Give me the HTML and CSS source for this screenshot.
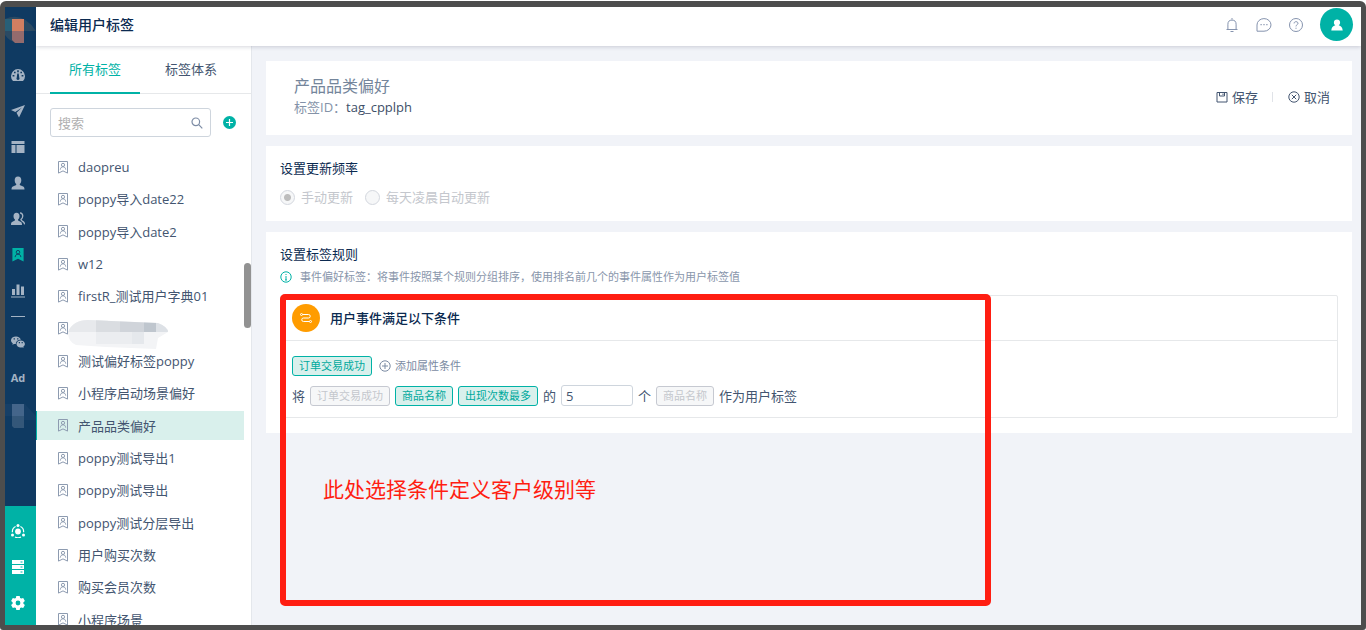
FILE: index.html
```
<!DOCTYPE html>
<html lang="zh-CN">
<head>
<meta charset="utf-8">
<title>编辑用户标签</title>
<link rel="stylesheet" href="styles.css">
</head>
<body>
<svg class="defs" aria-hidden="true">
  <symbol id="badge" viewBox="0 0 10 13"><path d="M.5.5h9v11.6L5 9.9.5 12.1z"/><circle cx="5" cy="3.9" r="1.6"/><path d="M2.3 8.6c.2-2 1.300-2.800 2.700-2.800s2.500.8 2.700 2.800"/></symbol>
</svg>
<div class="frame">
  <nav class="rail" aria-label="主导航">
    <svg class="logo" viewBox="0 0 31 36"><path d="M0 4h12v12H0z" fill="#285f77"/><path d="M0 4q18-8 31 12H19v12H12Q4 26 0 20z" fill="#2b4a63"/><path d="M0 4h7v12H0z" fill="#285f77"/><path d="M7 4h12v12H7z" fill="#d27f61"/><path d="M7 16h12v12h-9l-3-3z" fill="#946b6d"/></svg>
    <a class="rail-item" href="#" aria-label="概览"><svg viewBox="0 0 14 14"><path fill-rule="evenodd" d="M2 13a7 7 0 1 1 10 0zM6.200 2.200v2h1.600v-2zM3 3.700v1.600h1.600V3.700zm6.400 0v1.600H11V3.700zM1.600 7v1.600h1.800V7zm9 0v1.600h1.800V7zM6.300 5.500l-.6 4.300a1.500 1.500 0 1 0 2.600 0l-.6-4.300z"/></svg></a>
    <a class="rail-item" href="#" aria-label="营销"><svg viewBox="0 0 14 14"><path d="M14 1 0 6l4.300 2L11 3.500 5.500 8.700 8 13.500z"/></svg></a>
    <a class="rail-item" href="#" aria-label="页面"><svg viewBox="0 0 14 14"><path d="M.5 1h13v3H.5zM.5 5h4v8h-4zM5.500 5h8v8h-8z"/></svg></a>
    <a class="rail-item" href="#" aria-label="用户"><svg viewBox="0 0 14 14"><path d="M7 .5c2.300 0 3.300 1.700 3.300 3.700S9.500 7.300 8.700 8c0 1.200.5 1.400 2.300 2 1.700.600 2.500 1.200 2.500 3.500H.5C.5 11.200 1.300 10.600 3 10c1.800-.6 2.300-.8 2.300-2-.8-.7-1.600-1.800-1.600-3.800S4.700.5 7 .5z"/></svg></a>
    <a class="rail-item" href="#" aria-label="用户分群"><svg viewBox="0 0 14 14"><path d="M5.500.8c2 0 3 1.500 3 3.300S7.800 6.900 7 7.600c0 1.100.5 1.400 2 2 1.500.5 2 1.300 2 3.400H0c0-2.100.5-2.900 2-3.400 1.500-.6 2-.9 2-2-.8-.7-1.500-1.700-1.500-3.500S3.500.8 5.500.8z"/><path d="M9 .8c3.500.3 3.500 5 .9 6.800 0 1.800 3.400 1.300 3.800 4.700" fill="none" stroke="currentColor" stroke-width="1.300"/></svg></a>
    <a class="rail-item current" href="#" aria-label="用户标签"><svg viewBox="0 0 14 15"><path d="M1 0h12v14.500l-6-3-6 3z"/><g fill="none" stroke="#0f3a62"><circle cx="7" cy="4.500" r="1.900"/><path d="M3.900 9.800c.2-2.200 1.500-3.200 3.100-3.200s2.900 1 3.100 3.200"/></g></svg></a>
    <a class="rail-item" href="#" aria-label="分析"><svg viewBox="0 0 14 14"><path d="M1 5h3v6H1zM5.500.500h3V11h-3zM10 2.500h3V11h-3zM0 12.400h14v1H0z"/></svg></a>
    <hr class="rail-rule">
    <a class="rail-item" href="#" aria-label="微信"><svg viewBox="0 0 14 14"><path fill-rule="evenodd" d="M5 1.400C2.200 1.400 0 3.100 0 5.300c0 1.300.7 2.300 1.800 3l-.4 1.500 1.700-.9c.6.200 1.200.2 1.800.2C4.600 6.600 6.700 4.700 9.800 4.700 9.400 2.800 7.400 1.400 5 1.400zM2.600 3.200h1.300v1.300H2.600zm3.500 0h1.300v1.300H6.100z"/><path fill-rule="evenodd" d="M9.700 5.400c-2.500 0-4.200 1.600-4.200 3.500s1.800 3.500 4.200 3.500c.5 0 1-.1 1.400-.2l1.500.8-.4-1.300c1-.6 1.700-1.600 1.700-2.700 0-2-1.800-3.600-4.200-3.600zM7.800 7H9v1.200H7.800zm2.800 0h1.200v1.200h-1.200z"/></svg></a>
    <a class="rail-item ad" href="#">Ad</a>
    <svg class="rail-block" viewBox="0 0 31 32"><path d="M0 4h20l11 12v4H7V16H0z" fill="#163f67"/><path d="M7 4h12v12H7z" fill="#44658a"/><path d="M7 16h12v12H9l-2-2z" fill="#345779"/></svg>
    <div class="rail-foot">
      <a class="rail-item" href="#" aria-label="融合"><svg viewBox="0 0 14 14"><circle cx="7" cy="7.500" r="2.900"/><circle cx="7" cy="1.500" r="1.500"/><circle cx="1.500" cy="11" r="1.500"/><circle cx="12.500" cy="11" r="1.500"/><path d="M4.600 2.500C2.300 3.500 1.200 5.800 1.400 8.300M9.400 2.500c2.300 1 3.400 3.300 3.200 5.800M4 13c2 1 4 1 6 0" fill="none" stroke="currentColor" stroke-width="1.200"/></svg></a>
      <a class="rail-item" href="#" aria-label="数据"><svg viewBox="0 0 14 14"><path fill-rule="evenodd" d="M1 0h12v4H1zm8.500 1.500v1h2v-1zM1 5h12v4H1zm8.500 1.500v1h2v-1zM1 10h12v4H1zm8.500 1.500v1h2v-1z"/></svg></a>
      <a class="rail-item" href="#" aria-label="设置"><svg viewBox="0 0 14 14"><path fill-rule="evenodd" d="M5.300 0h3.400l.4 1.900 1.200.7 1.900-.6 1.700 2.900-1.500 1.300v1.600l1.500 1.300-1.700 2.900-1.900-.6-1.200.7-.4 1.900H5.300l-.4-1.900-1.200-.7-1.900.6L.1 9.100l1.500-1.300V6.200L.1 4.900 1.800 2l1.900.6 1.200-.7zM7 4.600a2.400 2.400 0 1 0 0 4.800 2.400 2.400 0 0 0 0-4.800z"/></svg></a>
    </div>
  </nav>
  <div class="app">
    <header class="topbar">
      <h1>编辑用户标签</h1>
      <div class="tools">
        <button aria-label="通知"><svg viewBox="0 0 16 16"><path d="M8 1v1.500M2.500 12.500h11M3.900 12.500V7.200a4.100 4.100 0 0 1 8.200 0v5.300M6.500 14.500h3"/></svg></button>
        <button aria-label="消息"><svg viewBox="0 0 16 16"><path d="M1 14.200V8a7 6.300 0 1 1 7 6.200z"/><path d="M4.500 7.700h1.200M7.400 7.700h1.200M10.300 7.700h1.200" stroke-width="1.200"/></svg></button>
        <button aria-label="帮助"><svg viewBox="0 0 16 16"><circle cx="8" cy="8" r="6.500"/><path d="M6.100 6.400C6.100 4 10 4.200 10 6.300 10 7.700 8 7.700 8 9.400M8 10.700v1.100"/></svg></button>
        <button class="avatar" aria-label="账户"><svg viewBox="0 0 12 12"><path d="M6 .4c1.900 0 3.100 1.300 3.100 3 0 1.300-.6 2.200-1.400 2.800 2.400.6 3.800 2.200 4 5.400H.3c.2-3.200 1.600-4.800 4-5.400C3.500 5.600 2.900 4.700 2.900 3.400 2.900 1.700 4.100.4 6 .4z"/></svg></button>
      </div>
    </header>
    <div class="body">
      <aside class="side">
        <div class="tabs"><button class="on">所有标签</button><button>标签体系</button></div>
        <div class="find">
          <label class="search"><input type="text" placeholder="搜索" aria-label="搜索"><svg viewBox="0 0 12 12"><circle cx="4.800" cy="4.800" r="3.800"/><path d="m7.700 7.700 3.600 3.600"/></svg></label>
          <button class="add" aria-label="新增"><svg viewBox="0 0 13 13"><circle cx="6.500" cy="6.500" r="6.500" fill="#00b2a6"/><path d="M3 6.500h7M6.500 3v7" stroke="#fff" stroke-width="1.200"/></svg></button>
        </div>
        <ul class="list">
          <li><a href="#"><svg><use href="#badge"/></svg>daopreu</a></li>
          <li><a href="#"><svg><use href="#badge"/></svg>poppy导入date22</a></li>
          <li><a href="#"><svg><use href="#badge"/></svg>poppy导入date2</a></li>
          <li><a href="#"><svg><use href="#badge"/></svg>w12</a></li>
          <li><a href="#"><svg><use href="#badge"/></svg>firstR_测试用户字典01</a></li>
          <li><a class="masked" href="#" aria-label="已隐藏"><svg><use href="#badge"/></svg><svg class="smudge" viewBox="0 0 100 29"><clipPath id="s"><path d="M0 12Q5 0 20 0l70 3q10 4 10 9l-10 6-2 11-50-2-30-2Q0 22 0 12z"/></clipPath><g clip-path="url(#s)"><path fill="#f3f4f6" d="M0 0h100v29H0z"/><path fill="#e7e9ec" d="M0 0h40v12H0z"/><path fill="#dadde1" d="M28 0h24v12H28z"/><path fill="#d0d4da" d="M52 0h24v12H52z"/><path fill="#bfc6ce" d="M76 0h12v12H76z"/><path fill="#dde1e6" d="M88 0h12v12H88z"/><path fill="#ebedf0" d="M28 12h36v12H28z"/><path fill="#e5e8ec" d="M64 12h12v12H64z"/></g></svg></a></li>
          <li><a href="#"><svg><use href="#badge"/></svg>测试偏好标签poppy</a></li>
          <li><a href="#"><svg><use href="#badge"/></svg>小程序启动场景偏好</a></li>
          <li><a class="selected" href="#"><svg><use href="#badge"/></svg>产品品类偏好</a></li>
          <li><a href="#"><svg><use href="#badge"/></svg>poppy测试导出1</a></li>
          <li><a href="#"><svg><use href="#badge"/></svg>poppy测试导出</a></li>
          <li><a href="#"><svg><use href="#badge"/></svg>poppy测试分层导出</a></li>
          <li><a href="#"><svg><use href="#badge"/></svg>用户购买次数</a></li>
          <li><a href="#"><svg><use href="#badge"/></svg>购买会员次数</a></li>
          <li><a href="#"><svg><use href="#badge"/></svg>小程序场景</a></li>
        </ul>
        <div class="thumb"></div>
      </aside>
      <main class="main">
        <section class="card intro">
          <div><h2>产品品类偏好</h2><p>标签ID：<b>tag_cpplph</b></p></div>
          <div class="actions">
            <button><svg viewBox="0 0 12 12"><path d="M1 1.500h10v9.500H1z"/><path d="M3.500 1.500V5h5V1.500M7 2.500v1.500"/></svg>保存</button>
            <button><svg viewBox="0 0 12 12"><circle cx="6" cy="6" r="5.200"/><path d="m3.800 3.800 4.400 4.400M8.200 3.800 3.800 8.200"/></svg>取消</button>
          </div>
        </section>
        <section class="card">
          <h3>设置更新频率</h3>
          <div class="radios">
            <label><input type="radio" name="freq" checked disabled>手动更新</label>
            <label><input type="radio" name="freq" disabled>每天凌晨自动更新</label>
          </div>
        </section>
        <section class="card rules">
          <h3>设置标签规则</h3>
          <p class="hint"><svg viewBox="0 0 12 12"><circle cx="6" cy="6" r="5.200"/><path d="M6 3v1M6 5v4M5 9h2"/></svg>事件偏好标签：将事件按照某个规则分组排序，使用排名前几个的事件属性作为用户标签值</p>
          <div class="box">
            <div class="box-head"><span class="disc"><svg viewBox="0 0 12 12"><path d="M2.500 2.500h6a1.700 1.700 0 0 1 0 3.500h-5a1.700 1.700 0 0 0 0 3.500h6"/><circle cx="1.500" cy="2.500" r="1"/><circle cx="10.500" cy="9.500" r="1"/></svg></span><h4>用户事件满足以下条件</h4></div>
            <div class="box-body">
              <div class="line"><button class="tag">订单交易成功</button><button class="more"><svg viewBox="0 0 12 12"><circle cx="6" cy="6" r="5.200"/><path d="M3 6h6M6 3v6"/></svg>添加属性条件</button></div>
              <div class="line"><span>将</span><button class="tag" disabled>订单交易成功</button><button class="tag">商品名称</button><button class="tag">出现次数最多</button><span>的</span><input class="num" type="text" value="5" aria-label="数量"><span>个</span><button class="tag" disabled>商品名称</button><span>作为用户标签</span></div>
            </div>
          </div>
          <div class="note">此处选择条件定义客户级别等</div>
        </section>
      </main>
    </div>
  </div>
</div>
</body>
</html>
```
FILE: styles.css
```
* { box-sizing: border-box; }
body {
  margin: 0;
  background: #fff;
  color: #435570;
  font: 13px/20px "Open Sans", "Noto Sans CJK SC", sans-serif;
}
h1, h2, h3, h4, p, ul { margin: 0; padding: 0; font-size: inherit; font-weight: inherit; }
button, input { font: inherit; color: inherit; margin: 0; }
button { padding: 0; border: 0; background: none; }
a { color: inherit; text-decoration: none; }
svg { flex: none; display: block; }
.defs { position: absolute; width: 0; height: 0; }

.frame {
  display: flex;
  height: calc(100vh - 1px);
  margin-top: 1px;
  border: 5px solid #4d4d4d;
  border-top-width: 6px;
  border-radius: 6px 6px 3px 3px;
  background: #4d4d4d;
  overflow: hidden;
}

/* navigation rail */
.rail { display: flex; flex-direction: column; width: 31px; flex: none; background: #0f3a62; color: #a4b3c4; }
.logo { width: 31px; height: 36px; margin: 8px 0 6px; }
.rail-item { display: flex; align-items: center; justify-content: center; height: 36px; padding-right: 5px; }
.rail-item svg { width: 14px; height: 14px; fill: currentColor; }
.rail-item.current { color: #00b2a6; }
.rail-item.ad { font-weight: 700; font-size: 11px; }
.rail-rule { width: 14px; height: 1px; margin: 7px 0 7px 6px; border: 0; background: #a4b3c4; }
.rail-block { width: 31px; height: 32px; margin-top: 4px; }
.rail-foot { margin-top: auto; padding: 7px 0 4px; background: #00b2a6; color: #fff; }

.app { display: flex; flex-direction: column; flex: 1; min-width: 0; }
.topbar {
  display: flex;
  align-items: center;
  justify-content: space-between;
  height: 39px;
  flex: none;
  padding: 0 8px 4px 14px;
  background: #fff;
  box-shadow: 0 1px 4px rgba(20, 30, 60, .18);
  z-index: 1;
}
.topbar h1 { font-size: 14px; font-weight: 500; color: #0b2a50; }
.tools { display: flex; align-items: center; gap: 16px; }
.tools svg { width: 16px; height: 16px; fill: none; stroke: #8593ae; }
.avatar { display: grid; place-items: center; width: 33px; height: 33px; border-radius: 50%; background: #00b2a6; }
.tools .avatar svg { width: 12px; height: 12px; fill: #fff; stroke: none; }

.body { display: flex; flex: 1; min-height: 0; }

/* tag list */
.side {
  position: relative;
  display: flex;
  flex-direction: column;
  width: 216px;
  flex: none;
  background: #fff;
  border-right: 1px solid #e4e7ec;
}
.tabs { display: flex; gap: 6px; height: 48px; flex: none; padding-left: 14px; border-bottom: 1px solid #e6e8ea; }
.tabs button { width: 90px; height: 48px; border-bottom: 2px solid transparent; }
.tabs .on { color: #00b2a6; border-color: #00b2a6; }
.find { display: flex; align-items: center; gap: 12px; padding: 14px; }
.search { display: flex; align-items: center; width: 161px; height: 29px; padding: 0 7px; border: 1px solid #ced5dd; border-radius: 3px; }
.search input { flex: 1; min-width: 0; padding: 0; border: 0; outline: 0; background: none; }
.search input::placeholder { color: #b0b0b0; opacity: 1; }
.search svg { width: 12px; height: 12px; fill: none; stroke: #7d8ca5; stroke-width: 1.2; }
.add svg { width: 13px; height: 13px; }
.list { display: flex; flex: 1; flex-direction: column; min-height: 0; margin: 0 7px -11px 0; list-style: none; }
.list li { display: flex; flex: 1; align-items: center; }
.list a { position: relative; display: flex; flex: 1; align-items: center; gap: 10px; height: 29px; padding-left: 22px; }
.list svg { width: 10px; height: 13px; fill: none; stroke: #8d9bb0; }
.list .selected { background: #d9f0ec; box-shadow: inset 1px 0 #00b2a6; }
.list .smudge { position: absolute; left: 32px; top: 6px; width: 100px; height: 29px; stroke: none; }
.thumb { position: absolute; right: 0; top: 217px; width: 7px; height: 65px; border-radius: 4px; background: #929292; }

/* editor */
.main { display: flex; flex: 1; flex-direction: column; gap: 11px; min-width: 0; padding: 15px 9px 0 14px; background: #f1f3f8; }
.card { padding: 12px 14px 13px; background: #fff; }
.card h3 { color: #0b2a50; }
.intro { display: flex; align-items: center; justify-content: space-between; padding: 14px 22px 17px 28px; }
.intro h2 { font-size: 16px; line-height: 22px; color: #74859b; }
.intro p { line-height: 21px; color: #8492a8; }
.intro b { font-weight: 400; color: #3d4f68; }
.actions { display: flex; }
.actions button { display: flex; align-items: center; gap: 4px; }
.actions button + button { margin-left: 14px; padding-left: 16px; background: linear-gradient(#e0e3e8, #e0e3e8) 0 50% / 1px 10px no-repeat; }
.actions svg, .hint svg, .more svg { width: 12px; height: 12px; fill: none; stroke: currentColor; }
.radios { display: flex; gap: 12px; margin-top: 9px; padding-bottom: 1px; color: #c4c7cd; }
.radios label { display: flex; align-items: center; gap: 6px; }
.radios input { appearance: none; width: 15px; height: 15px; border: 1px solid #d3d7de; border-radius: 50%; background: #f6f7f8; }
.radios input:checked { background: radial-gradient(circle, #bdbdbd 3px, #f6f7f8 4px); }
.rules { position: relative; padding-bottom: 15px; }
.hint { display: flex; align-items: center; gap: 8px; margin: 3px 0 8px; font-size: 11px; color: #8996ab; }
.hint svg { stroke: #00b2a6; }
.box { border: 1px solid #e6e8ea; border-radius: 2px; }
.box-head { display: flex; align-items: center; gap: 10px; height: 45px; padding-left: 11px; border-bottom: 1px solid #e6e8ea; }
.box-head h4 { color: #0b2a50; font-weight: 500; }
.disc { display: grid; place-items: center; width: 28px; height: 28px; border-radius: 50%; background: #ff9c00; }
.disc svg { width: 12px; height: 12px; fill: none; stroke: #fff; }
.box-body { display: grid; gap: 9px; padding: 15px 11px 11px; }
.line { display: flex; align-items: center; gap: 5px; }
.tag { height: 20px; padding: 0 6px; border: 1px solid #00b2a6; border-radius: 3px; background: #d9f0ec; color: #00a99d; font-size: 11px; line-height: 18px; }
.tag:disabled { border-color: #c6c9d1; background: #f6f7f8; color: #c4c7cd; }
.more { display: flex; align-items: center; gap: 4px; margin-left: 2px; font-size: 11px; color: #7b8ba3; }
.num { width: 72px; height: 21px; padding: 0 4px; border: 1px solid #ced5dd; border-radius: 3px; outline: 0; }

/* red annotation laid over the rule editor */
.note {
  position: absolute;
  left: 14px;
  top: 62px;
  width: 711px;
  height: 312px;
  padding: 174px 37px 0;
  border: 6px solid #ff1e12;
  border-radius: 5px;
  color: #ff1e12;
  font-size: 21px;
  line-height: 30px;
  pointer-events: none;
}
```
